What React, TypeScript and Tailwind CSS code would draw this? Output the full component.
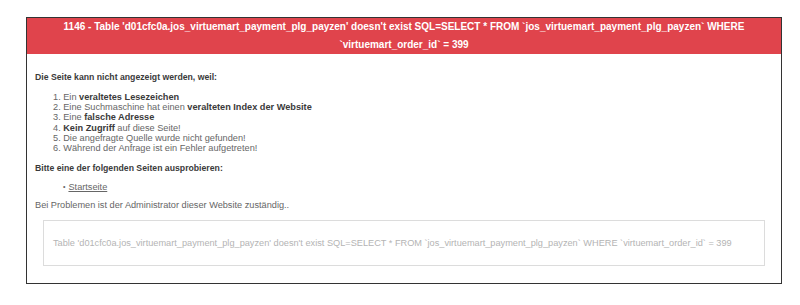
import React from 'react';

const reasons: React.ReactNode[] = [
    <>Ein <b className="text-[#3a3a3a]">veraltetes Lesezeichen</b></>,
    <>Eine Suchmaschine hat einen <b className="text-[#3a3a3a]">veralteten Index der Website</b></>,
    <>Eine <b className="text-[#3a3a3a]">falsche Adresse</b></>,
    <><b className="text-[#3a3a3a]">Kein Zugriff</b> auf diese Seite!</>,
    <>Die angefragte Quelle wurde nicht gefunden!</>,
    <>Während der Anfrage ist ein Fehler aufgetreten!</>,
];

export default function App() {
    return (
        <div className="min-h-[305px] bg-white pt-[17px] pl-[26px] font-['Liberation_Sans',Arial,sans-serif]">
            <div className="w-[756px] border border-[#333]">
                <div className="bg-[#e0444c] text-white font-bold text-[10px] leading-[18px] text-center">
                    1146 - Table 'd01cfc0a.jos_virtuemart_payment_plg_payzen' doesn't exist SQL=SELECT * FROM `jos_virtuemart_payment_plg_payzen` WHERE
                    <br />
                    `virtuemart_order_id` = 399
                </div>
                <div className="px-[8px] pt-[18px] pb-[17px] text-[9.2px] leading-[10px] text-[#666]">
                    <div className="font-bold text-[8.7px] text-[#3a3a3a]">Die Seite kann nicht angezeigt werden, weil:</div>
                    <ol className="mt-[10px] pl-[18px] leading-[10.2px]">
                        {reasons.map((r, i) => (
                            <li key={i}>{i + 1}. {r}</li>
                        ))}
                    </ol>
                    <div className="mt-[10px] font-bold text-[8.7px] text-[#3a3a3a]">Bitte eine der folgenden Seiten ausprobieren:</div>
                    <ul className="mt-[9px] pl-[28px]">
                        <li className="flex items-center gap-[3px]">
                            <span className="text-[7px]">•</span>
                            <a href="#" className="underline">Startseite</a>
                        </li>
                    </ul>
                    <div className="mt-[8px]">Bei Problemen ist der Administrator dieser Website zuständig..</div>
                    <div className="mt-[10px] mx-[8px] h-[46px] border border-[#dcdcdc] px-[9px] flex items-center text-[#b4b4b4]">
                        Table 'd01cfc0a.jos_virtuemart_payment_plg_payzen' doesn't exist SQL=SELECT * FROM `jos_virtuemart_payment_plg_payzen` WHERE `virtuemart_order_id` = 399
                    </div>
                </div>
            </div>
        </div>
    );
}
